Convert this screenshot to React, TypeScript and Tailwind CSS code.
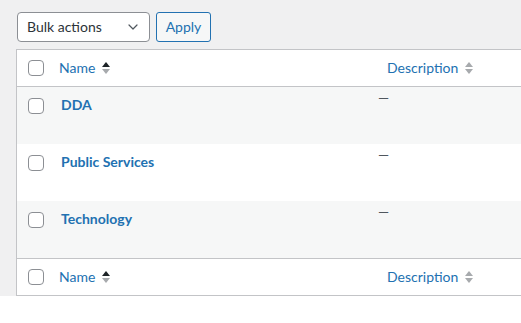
import { ChevronDown } from 'lucide-react';

// sort indicator: two stacked triangles
function SortArrows({ active }: { active?: boolean }) {
  return (
    <svg width="8" height="14" viewBox="0 0 8 14" className="shrink-0">
      <path d="M4 1 L8 6 L0 6 Z" fill={active ? '#1d2327' : '#a7aaad'} />
      <path d="M0 8 L8 8 L4 13 Z" fill="#a7aaad" />
    </svg>
  );
}

function Checkbox() {
  return <span className="block w-4 h-4 rounded-[4px] border border-[#8c8f94] bg-white" />;
}

function HeadRow({ border }: { border: 'top' | 'bottom' }) {
  return (
    <div
      className={`flex h-[37px] bg-white ${
        border === 'top' ? 'border-b border-[#c3c4c7]' : 'border-t border-[#c3c4c7]'
      }`}
    >
      <div className="w-[32px] shrink-0 flex items-center pl-[11px]">
        <Checkbox />
      </div>
      <div className="w-[319px] shrink-0 flex items-center gap-[7px] pl-[10px] text-[#2271b1]">
        <span>Name</span>
        <SortArrows active />
      </div>
      <div className="flex-1 flex items-center gap-[7px] pl-[19px] text-[#2271b1]">
        <span>Description</span>
        <SortArrows />
      </div>
    </div>
  );
}

const terms = ['DDA', 'Public Services', 'Technology'];

export default function App() {
  return (
    <div className="bg-white min-h-[323px] text-[14px] leading-[1.4]" style={{ fontFamily: 'Lato, "Open Sans", sans-serif' }}>
      <div className="bg-[#f0f0f1] h-[296px] pl-[16px] pt-[12px] overflow-hidden">
        {/* ───── bulk actions ───── */}
        <div className="flex gap-[6px] pl-[1px]">
          <div className="w-[133px] h-[30px] rounded-[4px] border border-[#8c8f94] bg-white flex items-center justify-between pl-[9px] pr-[8px] text-[#2c3338]">
            <span>Bulk actions</span>
            <ChevronDown size={16} strokeWidth={1.8} className="text-[#50575e]" />
          </div>
          <div className="w-[55px] h-[30px] rounded-[3px] border border-[#2271b1] bg-[#f6f7f7] flex items-center justify-center text-[#2271b1]">
            Apply
          </div>
        </div>

        {/* ───── table ───── */}
        <div className="mt-[7px] w-[560px] border border-[#c3c4c7] bg-white">
          <HeadRow border="top" />
          {terms.map((name, i) => (
            <div key={name} className={`flex h-[57px] ${i % 2 === 0 ? 'bg-[#f6f7f7]' : 'bg-white'}`}>
              <div className="w-[32px] shrink-0 pl-[11px] pt-[11px]">
                <Checkbox />
              </div>
              <div className="w-[319px] shrink-0 pl-[12px] pt-[8px]">
                <a className="font-bold text-[#2271b1]">{name}</a>
              </div>
              <div className="flex-1 pl-[10px] pt-[1px] text-[#50575e]">—</div>
            </div>
          ))}
          <HeadRow border="bottom" />
        </div>
      </div>
    </div>
  );
}
